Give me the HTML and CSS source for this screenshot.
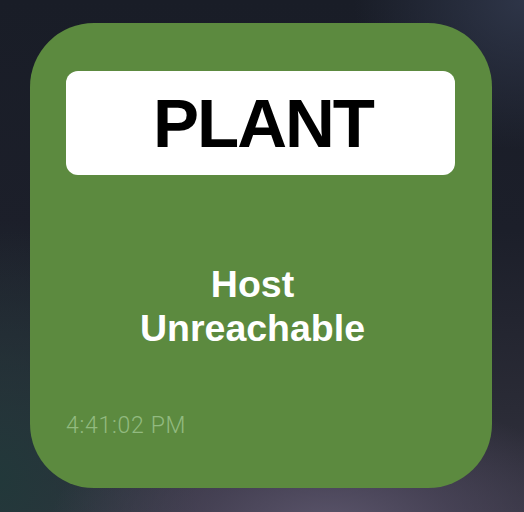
FILE: index.html
```html
<!DOCTYPE html>
<html>
<head>
<meta charset="utf-8">
<link rel="stylesheet" href="styles.css">
</head>
<body>
<div class="card">
  <div class="label">PLANT</div>
  <div class="status">Host<br>Unreachable</div>
  <div class="time">4:41:02 PM</div>
</div>
</body>
</html>
```
FILE: styles.css
```css
html, body {
  margin: 0;
  height: 100%;
}
body {
  box-sizing: border-box;
  width: 524px;
  height: 512px;
  padding: 23px 32px 24px 30px;
  overflow: hidden;
  background:
    radial-gradient(ellipse 280px 130px at 330px 525px, #5a546a 0%, rgba(80,74,96,0.65) 45%, rgba(40,40,55,0) 100%),
    radial-gradient(ellipse 200px 260px at 0px 480px, #22383a 0%, rgba(30,48,50,0) 100%),
    radial-gradient(ellipse 170px 150px at 524px 0px, #2e3548 0%, rgba(30,34,46,0) 100%),
    linear-gradient(180deg, #191d27 0%, #1c1f2a 45%, #2a2b36 80%, #33323f 100%);
  font-family: "Liberation Sans", Arial, sans-serif;
}
.card {
  box-sizing: border-box;
  height: 465px;
  background: #5c8a3f;
  border-radius: 64px;
  padding: 48px 37px 0 36px;
  display: flex;
  flex-direction: column;
}
.label {
  height: 104px;
  background: #ffffff;
  border-radius: 12px;
  display: flex;
  align-items: center;
  justify-content: center;
  padding-left: 5px;
  font-weight: 700;
  font-size: 69px;
  letter-spacing: -2px;
  color: #000;
}
.status {
  margin-top: 87px;
  padding-right: 16px;
  text-align: center;
  color: #fff;
  font-weight: 700;
  font-size: 37.5px;
  line-height: 44px;
}
.time {
  margin-top: 63px;
  font-family: Roboto, "Liberation Sans", sans-serif;
  font-weight: 300;
  font-size: 23px;
  line-height: 26px;
  letter-spacing: 0.7px;
  color: #92ba80;
}
```
